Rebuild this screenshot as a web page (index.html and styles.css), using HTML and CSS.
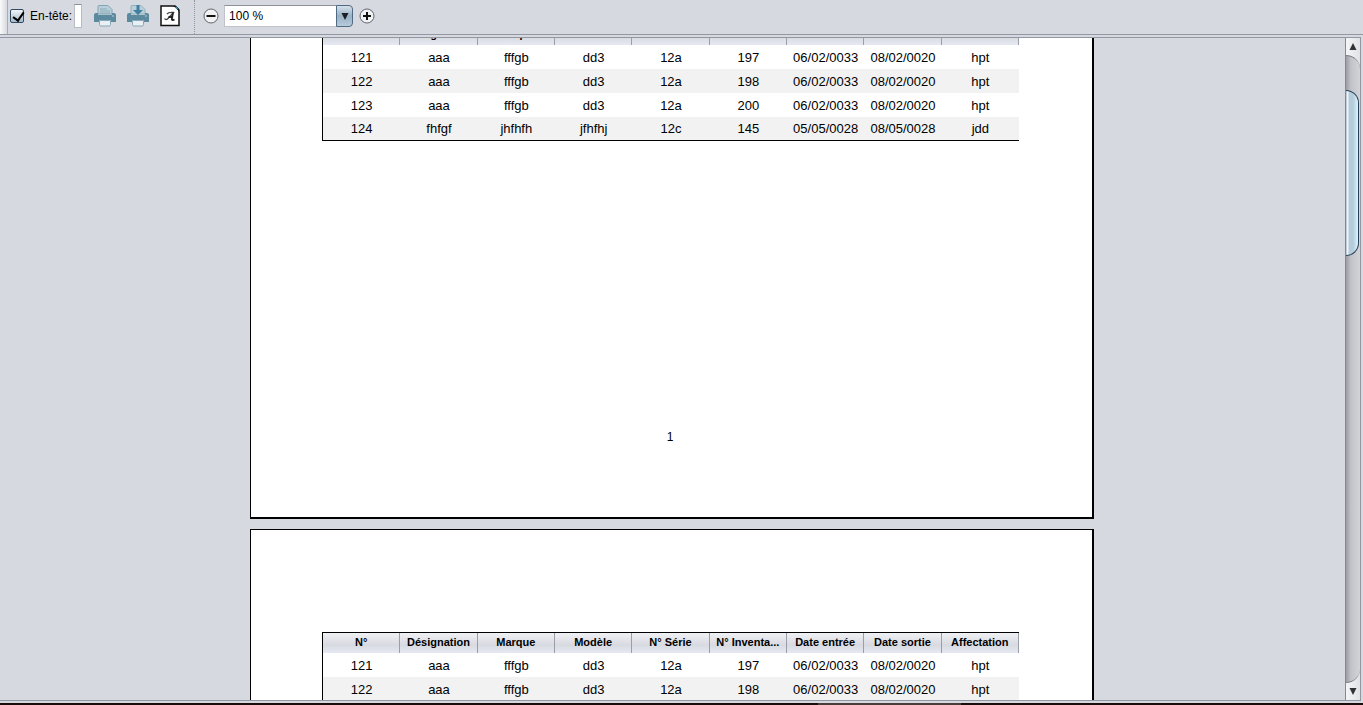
FILE: index.html
```html
<!DOCTYPE html>
<html lang="fr">
<head>
<meta charset="utf-8">
<title>Aperçu avant impression</title>
<link rel="stylesheet" href="styles.css">
</head>
<body>
<div class="toolbar" role="toolbar" aria-label="Impression">
  <span class="grip"></span>
  <label class="check"><input type="checkbox" checked>En-tête:</label>
  <input class="header-text" type="text" aria-label="Texte d'en-tête">
  <button class="tool" type="button" aria-label="Imprimer">
    <svg width="22" height="22" viewBox="0 0 22 22"><path d="M4 9V1.500Q4 .5 5 .5h9l4 4V9z" fill="#b9d0da" stroke="#7fa6b5"/><path d="M6 4h7M6 6h10M6 8h10" stroke="#8badb9"/><path d="M2 8h2v2h14V8h2q2 0 2 2v7h-5v-2H5v2H0v-7q0-2 2-2z" fill="#5b8a9f"/><path d="M18 11h2" stroke="#b9d0da"/><path d="M5.500 15.500h11v4q0 1.500-1.500 1.500H7q-1.500 0-1.500-1.500z" fill="#e9eff3" stroke="#86a9b8"/></svg>
  </button>
  <button class="tool" type="button" aria-label="Imprimer directement">
    <svg width="22" height="22" viewBox="0 0 22 22"><path d="M4 9V1.500Q4 .5 5 .5h9l4 4V9z" fill="#b9d0da" stroke="#8fb0bd"/><path d="M2 8h2v2h14V8h2q2 0 2 2v7h-5v-2H5v2H0v-7q0-2 2-2z" fill="#5b8a9f"/><path d="M9.500 0h3v5H16l-5 5-5-5h3.500z" fill="#427f9e"/><path d="M18 11h2" stroke="#b9d0da"/><path d="M5.500 15.500h11v4q0 1.500-1.500 1.500H7q-1.500 0-1.500-1.500z" fill="#e9eff3" stroke="#86a9b8"/></svg>
  </button>
  <button class="tool tool-page" type="button" aria-label="Mise en page">
    <svg width="20" height="22" viewBox="0 0 20 22"><path d="M1 1h14l4 4v15.500H1z" fill="#fff" stroke="#111" stroke-width="1.500"/><path d="M13 1h3l3 3v3q-1-3-6-6z" fill="#111"/><path d="M15.500 2l2 2" stroke="#3d9bc0" stroke-width="1.500"/><path d="M4.500 13.500q1.500 2.500 4-.5l5-5.500q-5-.5-6.500 1.500" fill="none" stroke="#444" stroke-width="1.300"/><path d="M13 7.500l-1.200 7q.7 1 2.700 0M8.500 12h4" fill="none" stroke="#222" stroke-width="1.800"/></svg>
  </button>
  <span class="divider"></span>
  <button class="zoom" type="button" aria-label="Zoom arrière">
    <svg width="16" height="16" viewBox="0 0 16 16"><circle cx="8" cy="8" r="7" fill="#f1f2f4" stroke="#62666d"/><path d="M3.500 8h9" stroke="#111" stroke-width="2"/></svg>
  </button>
  <span class="combo">
    <select aria-label="Zoom"><option>100 %</option><option>150 %</option></select>
    <span class="combo-arrow"><svg width="8" height="7" viewBox="0 0 8 7"><path d="M.5 0h7L4 7z" fill="#1d1f24"/></svg></span>
  </span>
  <button class="zoom" type="button" aria-label="Zoom avant">
    <svg width="16" height="16" viewBox="0 0 16 16"><circle cx="8" cy="8" r="7" fill="#f1f2f4" stroke="#62666d"/><path d="M4 8h8M8 4v8" stroke="#111" stroke-width="2"/></svg>
  </button>
</div>

<main class="preview">
  <div class="sheets">
    <section class="sheet sheet-first">
      <table class="report report-end">
        <thead><tr><th>N°</th><th>Désignation</th><th>Marque</th><th>Modèle</th><th>N° Série</th><th>N° Inventa...</th><th>Date entrée</th><th>Date sortie</th><th>Affectation</th></tr></thead>
        <tbody>
          <tr><td>121</td><td>aaa</td><td>fffgb</td><td>dd3</td><td>12a</td><td>197</td><td>06/02/0033</td><td>08/02/0020</td><td>hpt</td></tr>
          <tr><td>122</td><td>aaa</td><td>fffgb</td><td>dd3</td><td>12a</td><td>198</td><td>06/02/0033</td><td>08/02/0020</td><td>hpt</td></tr>
          <tr><td>123</td><td>aaa</td><td>fffgb</td><td>dd3</td><td>12a</td><td>200</td><td>06/02/0033</td><td>08/02/0020</td><td>hpt</td></tr>
          <tr><td>124</td><td>fhfgf</td><td>jhfhfh</td><td>jfhfhj</td><td>12c</td><td>145</td><td>05/05/0028</td><td>08/05/0028</td><td>jdd</td></tr>
        </tbody>
      </table>
      <p class="page-number">1</p>
    </section>
    <section class="sheet sheet-next">
      <table class="report">
        <thead><tr><th>N°</th><th>Désignation</th><th>Marque</th><th>Modèle</th><th>N° Série</th><th>N° Inventa...</th><th>Date entrée</th><th>Date sortie</th><th>Affectation</th></tr></thead>
        <tbody>
          <tr><td>121</td><td>aaa</td><td>fffgb</td><td>dd3</td><td>12a</td><td>197</td><td>06/02/0033</td><td>08/02/0020</td><td>hpt</td></tr>
          <tr><td>122</td><td>aaa</td><td>fffgb</td><td>dd3</td><td>12a</td><td>198</td><td>06/02/0033</td><td>08/02/0020</td><td>hpt</td></tr>
        </tbody>
      </table>
    </section>
  </div>
  <div class="scrollbar">
    <button class="step" type="button" aria-label="Défiler vers le haut"><svg width="8" height="7" viewBox="0 0 8 7"><path d="M.5 7h7L4 0z" fill="#303237"/></svg></button>
    <div class="track"><div class="thumb"></div></div>
    <button class="step" type="button" aria-label="Défiler vers le bas"><svg width="8" height="7" viewBox="0 0 8 7"><path d="M.5 0h7L4 7z" fill="#303237"/></svg></button>
  </div>
</main>
<div class="taskbar"><span class="task"></span></div>
</body>
</html>
```
FILE: styles.css
```css
* { box-sizing: border-box; }

body {
  margin: 0;
  height: 100vh;
  display: flex;
  flex-direction: column;
  overflow: hidden;
  background: #d6d9df;
  color: #000;
  font: 12px/16px "Liberation Sans", Arial, sans-serif;
}

button {
  padding: 0;
  border: 0;
  background: none;
  display: flex;
  align-items: center;
  justify-content: center;
}

svg { display: block; }

/* Toolbar */
.toolbar {
  flex: none;
  height: 35px;
  display: flex;
  align-items: center;
  padding-bottom: 2px;
  border-bottom: 1px solid #9297a1;
}

.grip {
  align-self: stretch;
  width: 8px;
  margin: 0 2px -2px 0;
  background: linear-gradient(90deg, #fbfbfc, #d6d9df);
  border-right: 1px solid #a9adb6;
}

.check {
  display: flex;
  align-items: center;
  gap: 6px;
}

.check input {
  appearance: none;
  position: relative;
  width: 14px;
  height: 14px;
  margin: 0;
  border: 1px solid #2f4a63;
  border-radius: 2px;
  background: linear-gradient(#f1f5f8, #a5bacb);
}

.check input:checked::after {
  content: "";
  position: absolute;
  left: 4px;
  top: 0;
  width: 5px;
  height: 9px;
  border: solid #000;
  border-width: 0 2px 2px 0;
  transform: rotate(35deg);
}

.header-text {
  width: 8px;
  height: 24px;
  margin: 0 12px 0 2px;
  padding: 0;
  border: 1px solid #b9bcc4;
  border-top-color: #8d9099;
  background: #fff;
}

.tool {
  width: 22px;
  height: 22px;
  margin-right: 11px;
}

.tool-page {
  width: 20px;
  margin-right: 13px;
}

.divider {
  align-self: stretch;
  margin: 0 8px -2px 1px;
  border-left: 1px dotted #8d929c;
}

.zoom {
  width: 16px;
  height: 16px;
}

.combo {
  display: flex;
  height: 22px;
  margin: 0 6px 0 5px;
}

.combo select {
  appearance: none;
  width: 112px;
  padding: 0 4px;
  border: 1px solid #c0c3ca;
  border-top-color: #8d9099;
  border-right: 0;
  border-radius: 0;
  background: #fff;
  color: #000;
  font: inherit;
}

.combo-arrow {
  width: 17px;
  display: flex;
  align-items: center;
  justify-content: center;
  border: 1px solid #4f6b84;
  border-radius: 0 4px 4px 0;
  background: linear-gradient(#d5e0e9, #9ab2c6 50%, #b6cbdc);
}

/* Preview area */
.preview {
  flex: 1;
  min-height: 0;
  display: flex;
  margin: 2px 2px 0 0;
  border: solid #9297a1;
  border-width: 1px 1px 1px 0;
}

.sheets {
  flex: 1;
  overflow: hidden;
  padding-right: 1px;
}

.sheet {
  max-width: 844px;
  margin: 0 auto 10px;
  padding: 0 73px 72px 71px;
  border: solid #000;
  border-width: 1px 2px 2px 1px;
  background: #fff;
}

.sheet-first {
  margin-top: -15px;
}

.sheet-next {
  min-height: 1194px;
  padding-top: 102px;
}

.report {
  width: 100%;
  table-layout: fixed;
  border-collapse: separate;
  border-spacing: 0;
  border-top: 1px solid #000;
  border-left: 1px solid #000;
}

.report-end {
  border-bottom: 1px solid #000;
}

.report th {
  height: 20px;
  padding: 0 0 2px;
  border-right: 1px solid #9a9ea8;
  background: linear-gradient(#f0f1f4, #d8dae1 60%, #e6e9f2);
  font-size: 11px;
  line-height: 17px;
  white-space: nowrap;
}

.report td {
  height: 24px;
  padding: 0;
  font-size: 13px;
  line-height: 23px;
  text-align: center;
}

.report tbody tr:nth-child(even) td {
  background: #f2f2f2;
}

.report-end tbody tr:last-child td {
  height: 23px;
  padding-top: 1px;
  line-height: 22px;
}

.page-number {
  margin: 288px 0 0;
  padding-right: 1px;
  text-align: center;
}

/* Scrollbar */
.scrollbar {
  flex: none;
  width: 15px;
  display: flex;
  flex-direction: column;
  border-left: 1px solid #85888f;
  background: linear-gradient(90deg, #f4f5f6, #e0e2e7);
}

.step {
  flex: none;
  height: 17px;
}

.track {
  flex: 1;
  padding: 34px 1px 0 0;
  border: solid #777a81;
  border-width: 1px 0;
  border-radius: 0 14px 14px 0;
  background: linear-gradient(90deg, #9b9da3, #c2c3c8 35%, #d3d4d8);
}

.thumb {
  height: 28%;
  border: 1px solid #26425b;
  border-left: 0;
  border-radius: 0 13px 13px 0;
  background: linear-gradient(90deg, #a9bac8, #fff 15%, #b6cad9 25%, #b4cede 60%, #e0f3fd);
}

/* Screen edge */
.taskbar {
  flex: none;
  height: 2px;
  margin-top: 2px;
  padding-left: 60%;
  background: #1b0d0b;
}

.task {
  display: block;
  width: 143px;
  height: 2px;
  background: #4c3c38;
}
```
